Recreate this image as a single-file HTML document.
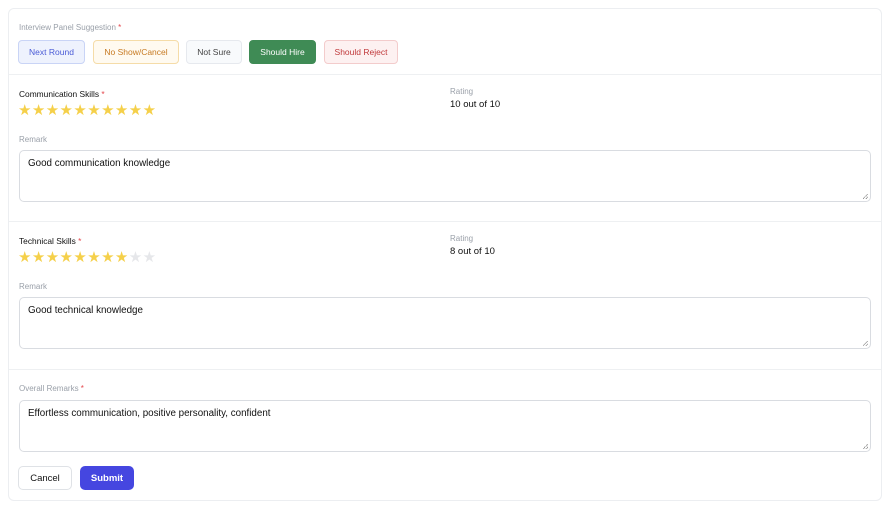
<!DOCTYPE html>
<html><head><style>
*{box-sizing:border-box;margin:0;padding:0}
body{width:890px;height:509px;background:#fff;font-family:"Liberation Sans",sans-serif;position:relative;overflow:hidden}
.card{position:absolute;left:8px;top:8px;width:874px;height:493px;border:1px solid #eceef1;border-radius:6px}
.a{position:absolute}
.lbl{font-size:8px;color:#9aa0a9}
.req{color:#e5484d}
.btn{position:absolute;top:40px;height:24px;border-radius:4px;font-size:8.5px;display:flex;align-items:center;justify-content:center;border:1px solid}
.hr{position:absolute;left:9px;width:872px;height:1px;background:#eef0f2}
.ta{position:absolute;left:19px;width:852px;height:52px;border:1px solid #d9dce1;border-radius:5px;font-size:9.8px;color:#111;padding:7px 8px}
.ta:after{content:"";position:absolute;right:2px;bottom:2px;width:5px;height:5px;background:linear-gradient(135deg,transparent 45%,#999 45%,#999 55%,transparent 55%,transparent 75%,#999 75%,#999 85%,transparent 85%)}
.stars{position:absolute;left:18px;font-size:15px;letter-spacing:0.4px;color:#f5d04a;line-height:15px}
.stars span{color:#e6e7ea}
.t{font-size:8.4px;color:#111}
.rv{font-size:9.5px;color:#111}
</style></head><body>
<div class="card"></div>
<div class="a lbl" style="left:19px;top:23px">Interview Panel Suggestion <span class="req">*</span></div>
<div class="btn" style="left:18px;width:67px;background:#eef2fd;border-color:#c9d4f6;color:#4a5bd6">Next Round</div>
<div class="btn" style="left:93px;width:86px;background:#fffaf0;border-color:#f5dca8;color:#c77a22">No Show/Cancel</div>
<div class="btn" style="left:186px;width:56px;background:#f8fafc;border-color:#e6e9ee;color:#444">Not Sure</div>
<div class="btn" style="left:249px;width:67px;background:#3f8b55;border-color:#3f8b55;color:#fff">Should Hire</div>
<div class="btn" style="left:324px;width:74px;background:#fdf1f1;border-color:#f3cccc;color:#c0393b">Should Reject</div>
<div class="hr" style="top:74px"></div>

<div class="a t" style="left:19px;top:89px">Communication Skills <span class="req">*</span></div>
<div class="stars" style="top:103px">★★★★★★★★★★</div>
<div class="a lbl" style="left:450px;top:87px">Rating</div>
<div class="a rv" style="left:450px;top:99px">10 out of 10</div>
<div class="a lbl" style="left:19px;top:135px">Remark</div>
<div class="ta" style="top:150px">Good communication knowledge</div>
<div class="hr" style="top:221px"></div>

<div class="a t" style="left:19px;top:236px">Technical Skills <span class="req">*</span></div>
<div class="stars" style="top:250px">★★★★★★★★<span>★★</span></div>
<div class="a lbl" style="left:450px;top:234px">Rating</div>
<div class="a rv" style="left:450px;top:246px">8 out of 10</div>
<div class="a lbl" style="left:19px;top:282px">Remark</div>
<div class="ta" style="top:297px">Good technical knowledge</div>
<div class="hr" style="top:369px"></div>

<div class="a lbl" style="left:19px;top:384px">Overall Remarks <span class="req">*</span></div>
<div class="ta" style="top:400px">Effortless communication, positive personality, confident</div>
<div class="a" style="left:18px;top:466px;width:54px;height:24px;border:1px solid #dfe2e6;border-radius:5px;font-size:9.5px;color:#111;display:flex;align-items:center;justify-content:center">Cancel</div>
<div class="a" style="left:80px;top:466px;width:54px;height:24px;background:#4546e0;border-radius:5px;font-size:9.5px;font-weight:bold;color:#fff;display:flex;align-items:center;justify-content:center">Submit</div>
</body></html>
